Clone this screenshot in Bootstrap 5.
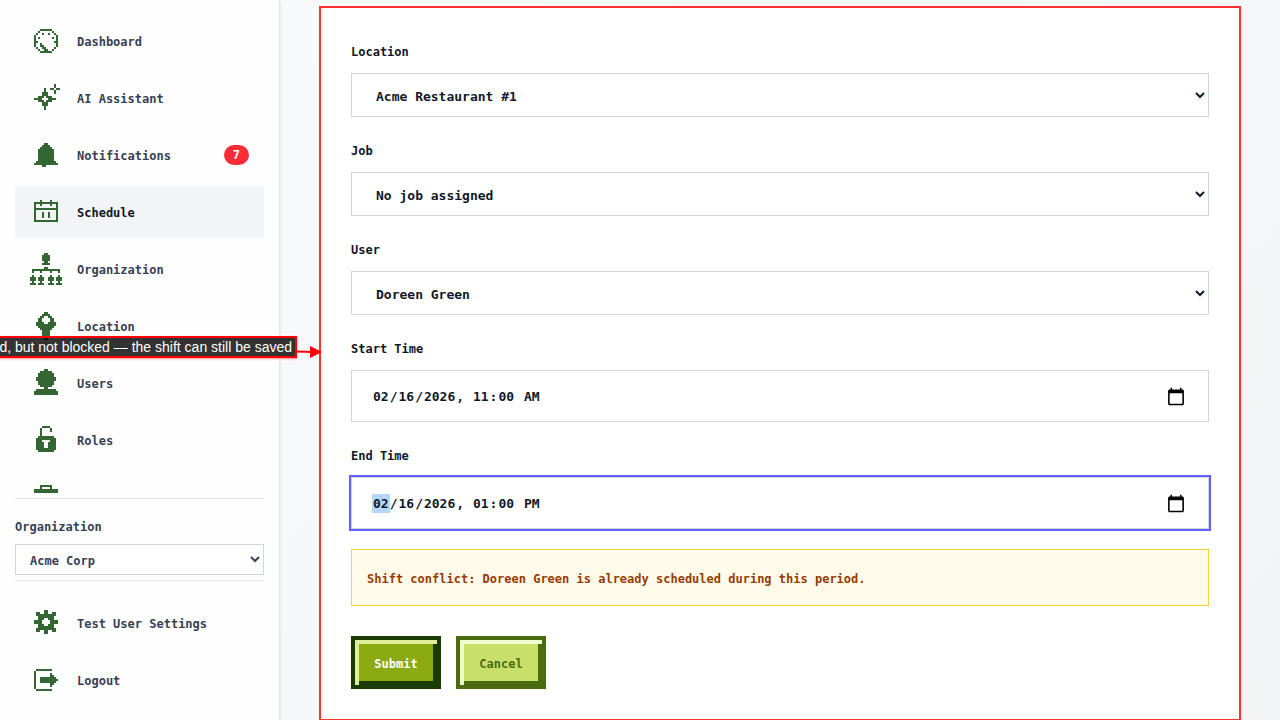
<!DOCTYPE html>
<html lang="en">
<head>
<meta charset="utf-8">
<meta name="viewport" content="width=device-width, initial-scale=1">
<title>Edit shift</title>
<link href="https://cdn.jsdelivr.net/npm/bootstrap@5.3.0/dist/css/bootstrap.min.css" rel="stylesheet">
<style>
  body { font-family: "DejaVu Sans Mono", "Liberation Mono", monospace; font-size: 12px; line-height: 20px; font-weight: 700; color: #364153; background: linear-gradient(135deg, #f9fafb, #f3f4f6) fixed; }
  .side { width: 280px; padding: 15px 15px 14px; background: #fefefe; border-right: 1px solid #e5e7eb; box-shadow: 0 1px 3px rgba(0,0,0,.1); }
  .side-list { gap: 5px; min-height: 0; }
  .side-link { height: 52px; padding: 0 15px; gap: 15px; color: #364153; text-decoration: none; }
  .side-link.active { background: #f3f4f6; color: #101828; }
  .side-text { padding-top: 2px; }
  .icon-slot { width: 32px; }
  .px-icon { stroke: #336633; fill: none; shape-rendering: crispEdges; display: block; overflow: visible; }
  .count { background: #fb2c36; font-size: 12px; line-height: 20px; padding: 0 9px; }
  .side-org { border: solid #e5e7eb; border-width: 1px 0; margin-top: 5px; padding: 18px 0 5px; }
  .org-label { margin-bottom: 7px; }
  .side-foot { padding-top: 16px; gap: 5px; }
  .field { display: block; width: 100%; background-color: #fff; border: 1px solid #d1d5dc; border-radius: 0; color: #101828; font-size: 13px; font-weight: 700; padding: 0 20px; }
  select.field { height: 44px; padding-top: 2px; }
  input.field { height: 52px; padding-top: 1px; }
  select.field-sm { height: 31px; padding: 2px 10px 0; font-size: 12px; color: #364153; }
  input.field:focus { outline: 2px solid #615fff; }
  .field::-webkit-datetime-edit-month-field, .field::-webkit-datetime-edit-day-field, .field::-webkit-datetime-edit-year-field,
  .field::-webkit-datetime-edit-hour-field, .field::-webkit-datetime-edit-minute-field, .field::-webkit-datetime-edit-ampm-field { padding: 2px 1px; }
  .field:focus::-webkit-datetime-edit-month-field { background-image: linear-gradient(#b3d7ff, #b3d7ff); -webkit-text-fill-color: #101828; }
  .field::-webkit-calendar-picker-indicator { width: 20px; height: 20px; padding: 2px; }
  .page { padding: 6px 39px 0; min-width: 0; }
  .panel { background: #fff; border: 2px solid #ff3030; padding: 30px; }
  .panel form { gap: 20px; }
  .field-label { line-height: 29px; margin-bottom: 6px; color: #101828; }
  .conflict { background: #fffbeb; border: 1px solid #ffd230; color: #973c00; padding: 19px 15px 16px; }
  .actions { gap: 15px; padding-top: 10px; }
  .pixel-btn { --edge: #1a3a00; --shine: #dfee9a; width: 90px; height: 53px; padding: 2px 0 0; border: 4px solid var(--edge); border-radius: 0; font-weight: 700; font-size: 12px; box-shadow: inset 4px 4px 0 var(--shine), inset -4px -4px 0 var(--edge); background: #8aaa10; color: #fff; }
  .pixel-btn.alt { --edge: #4a6b10; --shine: #f0facc; background: #c8df6a; color: #4a6b10; }
  .callout { top: 336px; left: 0; z-index: 5; font-family: "Liberation Sans", Arial, sans-serif; font-size: 14px; font-weight: 400; line-height: 18px; color: #fff; }
  .callout-text { width: 297px; overflow: hidden; background: rgba(0,0,0,.8); border: 2px solid #f00; border-left: 0; padding-right: 3px; white-space: nowrap; box-shadow: 0 1px 2px rgba(255,0,0,.4); }
</style>
</head>
<body class="vh-100 overflow-hidden">
<div class="d-flex h-100">
  <aside class="side d-flex flex-column flex-shrink-0">
    <nav class="side-list d-flex flex-column flex-grow-1 overflow-hidden" aria-label="Main">
      <a class="side-link d-flex align-items-center flex-shrink-0" href="#">
        <span class="icon-slot d-flex justify-content-center"><svg class="px-icon" width="24" height="24" viewBox="0 -.5 12 12"><path d="M3 0h6M2 1h1M9 1h1M1 2h1M4 2h1M7 2h1M10 2h1M0 3h1M11 3h1M0 4h1M2 4h1M9 4h1M11 4h1M0 5h1M11 5h1M0 6h2M10 6h2M0 7h1M3 7h1M11 7h1M0 8h1M3 8h2M11 8h1M1 9h1M4 9h2M10 9h1M2 10h1M5 10h2M9 10h1M3 11h6"/></svg></span>
        <span class="side-text">Dashboard</span></a>
      <a class="side-link d-flex align-items-center flex-shrink-0" href="#">
        <span class="icon-slot d-flex justify-content-center"><svg class="px-icon" width="24" height="28" viewBox="0 -.5 12 14"><path d="M10 0h1M10 1h1M8 2h2M11 2h2M10 3h1M10 4h1M5 2h1M5 3h1M4 4h3M4 5h3M2 6h3M6 6h3M0 7h4M7 7h4M2 8h3M6 8h3M4 9h3M4 10h3M5 11h1M5 12h1"/></svg></span>
        <span class="side-text">AI Assistant</span></a>
      <a class="side-link d-flex align-items-center flex-shrink-0" href="#">
        <span class="icon-slot d-flex justify-content-center"><svg class="px-icon" width="24" height="24" viewBox="0 -.5 12 12"><path d="M5 0h2M4 1h4M3 2h6M2 3h8M2 4h8M2 5h8M2 6h8M2 7h8M2 8h8M1 9h10M0 10h12M4 11h2"/></svg></span>
        <span class="side-text">Notifications</span><span class="count badge rounded-pill ms-auto">7</span></a>
      <a class="side-link active d-flex align-items-center flex-shrink-0" href="#" aria-current="page">
        <span class="icon-slot d-flex justify-content-center"><svg class="px-icon" width="24" height="24" viewBox="0 -.5 12 12"><path d="M3 0h1M8 0h1M0 1h12M0 2h1M3 2h1M8 2h1M11 2h1M0 3h1M11 3h1M0 4h12M0 5h1M11 5h1M0 6h1M4 6h1M7 6h1M11 6h1M0 7h1M4 7h1M7 7h1M11 7h1M0 8h1M4 8h1M7 8h1M11 8h1M0 9h1M11 9h1M0 10h12"/></svg></span>
        <span class="side-text">Schedule</span></a>
      <a class="side-link d-flex align-items-center flex-shrink-0" href="#">
        <span class="icon-slot d-flex justify-content-center"><svg class="px-icon" width="32" height="32" viewBox="0 -.5 16 16"><path d="M7 0h2M6 1h4M6 2h4M6 3h4M7 4h2M6 5h4M7 7h2M1 8h14M1 9h1M5 9h1M10 9h1M14 9h1M1 11h1M5 11h1M10 11h1M14 11h1M0 12h3M4 12h3M9 12h3M13 12h3M0 13h3M4 13h3M9 13h3M13 13h3M1 14h1M5 14h1M10 14h1M14 14h1M0 15h3M4 15h3M9 15h3M13 15h3"/></svg></span>
        <span class="side-text">Organization</span></a>
      <a class="side-link d-flex align-items-center flex-shrink-0" href="#">
        <span class="icon-slot d-flex justify-content-center"><svg class="px-icon" width="20" height="28" viewBox="0 -.5 10 14"><path d="M4 0h2M3 1h4M2 2h2M6 2h2M1 3h2M7 3h2M1 4h2M7 4h2M0 5h4M6 5h4M0 6h10M1 7h8M2 8h6M3 9h4M3 10h4M3 11h4M3 12h4M4 13h2"/></svg></span>
        <span class="side-text">Location</span></a>
      <a class="side-link d-flex align-items-center flex-shrink-0" href="#">
        <span class="icon-slot d-flex justify-content-center"><svg class="px-icon" width="24" height="28" viewBox="0 -.5 12 14"><path d="M5 0h2M3 1h6M2 2h8M2 3h8M1 4h10M1 5h10M2 6h8M2 7h8M3 8h6M5 9h2M1 10h10M0 11h12M0 12h12"/></svg></span>
        <span class="side-text">Users</span></a>
      <a class="side-link d-flex align-items-center flex-shrink-0" href="#">
        <span class="icon-slot d-flex justify-content-center"><svg class="px-icon" width="20" height="28" viewBox="0 -.5 10 14"><path d="M3 0h4M2 1h1M7 1h1M2 2h1M7 2h1M2 3h1M2 4h1M1 5h8M0 6h10M0 7h3M7 7h3M0 8h4M6 8h4M0 9h4M6 9h4M0 10h4M6 10h4M0 11h10M1 12h8"/></svg></span>
        <span class="side-text">Roles</span></a>
      <a class="side-link d-flex align-items-center flex-shrink-0" href="#">
        <span class="icon-slot d-flex justify-content-center"><svg class="px-icon" width="24" height="24" viewBox="0 -.5 12 12"><path d="M3 0h6M3 1h1M8 1h1M0 2h12M0 3h12M0 4h12M0 5h12M0 6h12M0 7h12M0 8h12M0 9h12"/></svg></span></a>
    </nav>
    <div class="side-org">
      <label class="org-label d-block" for="org">Organization</label>
      <select class="field field-sm" id="org"><option>Acme Corp</option></select>
    </div>
    <nav class="side-foot d-flex flex-column" aria-label="Account">
      <a class="side-link d-flex align-items-center" href="#">
        <span class="icon-slot d-flex justify-content-center"><svg class="px-icon" width="24" height="26" viewBox="0 -.5 12 13"><path d="M5 0h2M1 1h2M5 1h2M9 1h2M1 2h10M2 3h8M2 4h3M7 4h3M0 5h4M8 5h4M0 6h4M8 6h4M2 7h3M7 7h3M2 8h8M1 9h10M1 10h2M5 10h2M9 10h2M5 11h2"/></svg></span>
        <span class="side-text">Test User Settings</span></a>
      <a class="side-link d-flex align-items-center" href="#">
        <span class="icon-slot d-flex justify-content-center"><svg class="px-icon" width="24" height="22" viewBox="0 -.5 12 11"><path d="M1 0h8M0 1h1M0 2h1M8 2h1M0 3h1M8 3h2M0 4h1M3 4h8M0 5h1M3 5h9M0 6h1M3 6h8M0 7h1M8 7h2M0 8h1M8 8h1M0 9h1M1 10h8"/></svg></span>
        <span class="side-text">Logout</span></a>
    </nav>
  </aside>
  <main class="page flex-grow-1">
    <div class="panel">
      <form class="d-flex flex-column">
        <div><label class="field-label d-block" for="location">Location</label>
          <select class="field" id="location"><option>Acme Restaurant #1</option></select></div>
        <div><label class="field-label d-block" for="job">Job</label>
          <select class="field" id="job"><option>No job assigned</option></select></div>
        <div><label class="field-label d-block" for="user">User</label>
          <select class="field" id="user"><option>Doreen Green</option></select></div>
        <div><label class="field-label d-block" for="start">Start Time</label>
          <input class="field" type="datetime-local" id="start" value="2026-02-16T11:00"></div>
        <div><label class="field-label d-block" for="end">End Time</label>
          <input class="field" type="datetime-local" id="end" value="2026-02-16T13:00" autofocus></div>
        <div class="conflict" role="alert">Shift conflict: Doreen Green is already scheduled during this period.</div>
        <div class="actions d-flex">
          <button class="pixel-btn" type="submit">Submit</button>
          <button class="pixel-btn alt" type="button">Cancel</button>
        </div>
      </form>
    </div>
  </main>
</div>
<div class="callout position-absolute d-flex align-items-end">
  <div class="callout-text d-flex justify-content-end">d, but not blocked — the shift can still be saved</div>
  <svg width="25" height="14" viewBox="0 0 25 14"><path d="M0 7.500L15 8" stroke="#f00" stroke-width="2"/><path d="M13 2l12 6-12 6z" fill="#f00"/></svg>
</div>
<script src="https://cdn.jsdelivr.net/npm/bootstrap@5.3.0/dist/js/bootstrap.bundle.min.js"></script>
<script>document.getElementById('end').focus();</script>
</body>
</html>
